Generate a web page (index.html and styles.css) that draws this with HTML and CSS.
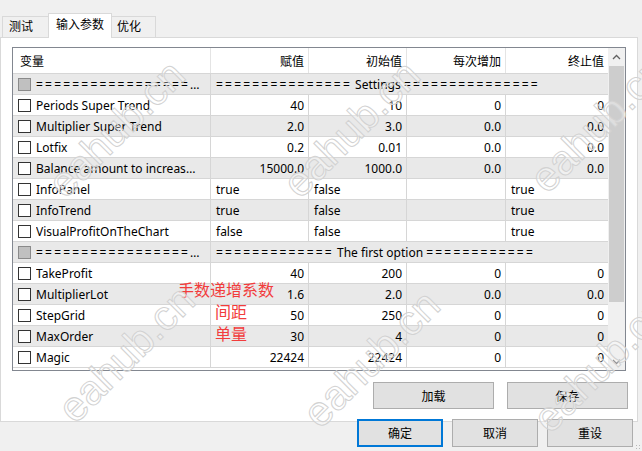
FILE: index.html
```
<!DOCTYPE html>
<html lang="zh-CN">
<head>
    <meta charset="UTF-8">
    <title>输入参数</title>
    <link rel="stylesheet" href="styles.css">
</head>
<body>
    <div class="window">
        <div class="tabs">
            <div class="tab">测试</div>
            <div class="tab active">输入参数</div>
            <div class="tab">优化</div>
        </div>

        <div class="panel">
            <div class="grid">
                <div class="table">
                    <div class="row head">
                        <div class="cell name">变量</div>
                        <div class="cell num">赋值</div>
                        <div class="cell num">初始值</div>
                        <div class="cell num">每次增加</div>
                        <div class="cell num">终止值</div>
                    </div>

                    <div class="row alt sep">
                        <div class="cell name"><span class="chk off"></span><span class="label rule">===============================</span></div>
                        <div class="cell span"><span class="rule">===============</span>&nbsp;Settings&nbsp;<span class="rule">===============</span></div>
                    </div>
                    <div class="row">
                        <div class="cell name"><span class="chk"></span><span class="label">Periods Super Trend</span></div>
                        <div class="cell num">40</div>
                        <div class="cell num">10</div>
                        <div class="cell num">0</div>
                        <div class="cell num">0</div>
                    </div>
                    <div class="row alt">
                        <div class="cell name"><span class="chk"></span><span class="label">Multiplier Super Trend</span></div>
                        <div class="cell num">2.0</div>
                        <div class="cell num">3.0</div>
                        <div class="cell num">0.0</div>
                        <div class="cell num">0.0</div>
                    </div>
                    <div class="row">
                        <div class="cell name"><span class="chk"></span><span class="label">Lotfix</span></div>
                        <div class="cell num">0.2</div>
                        <div class="cell num">0.01</div>
                        <div class="cell num">0.0</div>
                        <div class="cell num">0.0</div>
                    </div>
                    <div class="row alt">
                        <div class="cell name"><span class="chk"></span><span class="label">Balance amount to increase lot</span></div>
                        <div class="cell num">15000.0</div>
                        <div class="cell num">1000.0</div>
                        <div class="cell num">0.0</div>
                        <div class="cell num">0.0</div>
                    </div>
                    <div class="row">
                        <div class="cell name"><span class="chk"></span><span class="label">InfoPanel</span></div>
                        <div class="cell">true</div>
                        <div class="cell">false</div>
                        <div class="cell"></div>
                        <div class="cell">true</div>
                    </div>
                    <div class="row alt">
                        <div class="cell name"><span class="chk"></span><span class="label">InfoTrend</span></div>
                        <div class="cell">true</div>
                        <div class="cell">false</div>
                        <div class="cell"></div>
                        <div class="cell">true</div>
                    </div>
                    <div class="row">
                        <div class="cell name"><span class="chk"></span><span class="label">VisualProfitOnTheChart</span></div>
                        <div class="cell">false</div>
                        <div class="cell">false</div>
                        <div class="cell"></div>
                        <div class="cell">true</div>
                    </div>

                    <div class="row alt sep">
                        <div class="cell name"><span class="chk off"></span><span class="label rule">===============================</span></div>
                        <div class="cell span"><span class="rule">=============</span>&nbsp;The first option&nbsp;<span class="rule">============</span></div>
                    </div>
                    <div class="row">
                        <div class="cell name"><span class="chk"></span><span class="label">TakeProfit</span></div>
                        <div class="cell num">40</div>
                        <div class="cell num">200</div>
                        <div class="cell num">0</div>
                        <div class="cell num">0</div>
                    </div>
                    <div class="row alt">
                        <div class="cell name"><span class="chk"></span><span class="label">MultiplierLot</span></div>
                        <div class="cell num">1.6</div>
                        <div class="cell num">2.0</div>
                        <div class="cell num">0.0</div>
                        <div class="cell num">0.0</div>
                    </div>
                    <div class="row">
                        <div class="cell name"><span class="chk"></span><span class="label">StepGrid</span></div>
                        <div class="cell num">50</div>
                        <div class="cell num">250</div>
                        <div class="cell num">0</div>
                        <div class="cell num">0</div>
                    </div>
                    <div class="row alt">
                        <div class="cell name"><span class="chk"></span><span class="label">MaxOrder</span></div>
                        <div class="cell num">30</div>
                        <div class="cell num">4</div>
                        <div class="cell num">0</div>
                        <div class="cell num">0</div>
                    </div>
                    <div class="row">
                        <div class="cell name"><span class="chk"></span><span class="label">Magic</span></div>
                        <div class="cell num">22424</div>
                        <div class="cell num">22424</div>
                        <div class="cell num">0</div>
                        <div class="cell num">0</div>
                    </div>

                    <!-- notes written over the grid -->
                    <div class="note note-lot">手数递增系数</div>
                    <div class="note note-step">间距</div>
                    <div class="note note-max">单量</div>
                </div>

                <div class="scrollbar">
                    <div class="arrow">
                        <svg width="9" height="6" viewBox="0 0 9 6"><path d="M1 5 L4.5 1.5 L8 5" fill="none" stroke="#606060" stroke-width="1.3"/></svg>
                    </div>
                    <div class="track"><div class="thumb"></div></div>
                    <div class="arrow">
                        <svg width="9" height="6" viewBox="0 0 9 6"><path d="M1 1 L4.5 4.5 L8 1" fill="none" stroke="#606060" stroke-width="1.3"/></svg>
                    </div>
                </div>
            </div>

            <div class="file-buttons">
                <button class="btn wide">加载</button>
                <button class="btn wide">保存</button>
            </div>
        </div>

        <div class="dialog-buttons">
            <button class="btn default">确定</button>
            <button class="btn">取消</button>
            <button class="btn">重设</button>
        </div>
        <div class="grip"></div>

        <!-- site stamp -->
        <div class="stamp s1">eahub.cn</div>
        <div class="stamp s2">eahub.cn</div>
        <div class="stamp s3">eahub.cn</div>
        <div class="stamp s4">eahub.cn</div>
        <div class="stamp s5">eahub.cn</div>
        <div class="stamp s6">eahub.cn</div>
    </div>
</body>
</html>
```

FILE: styles.css
```
body {
    margin: 0;
    background-color: #f0f0f0;
    font-family: "Noto Sans", "Noto Sans CJK SC", sans-serif;
    font-size: 12px;
    color: #000;
}
.window {
    position: relative;
    width: 642px;
    height: 451px;
    overflow: hidden;
}
.tabs {
    display: flex;
    align-items: flex-end;
    height: 37px;
    padding-left: 2px;
    box-sizing: border-box;
}
.tab {
    width: 47px;
    height: 21px;
    box-sizing: border-box;
    padding-left: 6px;
    border: 1px solid #d9d9d9;
    border-bottom: none;
    background-color: #f0f0f0;
    line-height: 20px;
    margin-right: -1px;
}
.tab.active {
    position: relative;
    z-index: 1;
    width: 64px;
    height: 25px;
    margin-bottom: -1px;
    padding-left: 7px;
    background-color: white;
    line-height: 22px;
}
.tab:last-child {
    width: 45px;
    padding-left: 5px;
}
.panel {
    width: 638px;
    height: 385px;
    box-sizing: border-box;
    border: 1px solid #d9d9d9;
    background-color: white;
    padding: 9px 0 0 11px;
}
.grid {
    display: flex;
    width: 614px;
    height: 324px;
    box-sizing: border-box;
    border: 1px solid #828790;
}
.table {
    position: relative;
    width: 595px;
}
.row {
    display: grid;
    grid-template-columns: 198px 98px 98px 99px 102px;
    height: 21px;
    box-sizing: border-box;
    border-bottom: 1px solid #d6d6d6;
}
.row.alt {
    background-color: #e9e9e9;
}
.row.head {
    height: 26px;
    background-color: white;
}
.cell {
    display: flex;
    align-items: center;
    padding: 0 4px 0 5px;
    border-right: 1px solid #d6d6d6;
    white-space: nowrap;
    overflow: hidden;
}
.cell.num {
    justify-content: flex-end;
}
.row.head .cell {
    padding-top: 1px;
    border-color: #e4e4e4;
}
.row.head .name {
    padding-left: 7px;
}
.cell:last-child {
    border-right: none;
}
.cell.span {
    grid-column: 2 / 6;
    padding-left: 5px;
}
.name {
    padding-left: 5px;
}
.label {
    overflow: hidden;
    text-overflow: ellipsis;
    padding-right: 6px;
}
/* the divider rows use wide "=" runs */
.rule {
    letter-spacing: 2.2px;
}
.chk {
    flex: none;
    width: 13px;
    height: 13px;
    box-sizing: border-box;
    border: 1px solid #333;
    background-color: white;
    margin-right: 5px;
}
.chk.off {
    border-color: #8a8a8a;
    background-color: #c0c0c0;
}
.note {
    position: absolute;
    color: #f23c3c;
    font-size: 16px;
    line-height: 20px;
}
.note-lot {
    left: 165px;
    top: 232px;
}
.note-step {
    left: 202px;
    top: 254px;
}
.note-max {
    left: 202px;
    top: 276px;
}
.scrollbar {
    display: flex;
    flex-direction: column;
    width: 17px;
    background-color: #f0f0f0;
}
.arrow {
    display: flex;
    align-items: center;
    justify-content: center;
    height: 17px;
}
.track {
    flex: 1;
}
.thumb {
    height: 236px;
    margin: 1px 1px 0;
    background-color: #cdcdcd;
}
.file-buttons {
    display: flex;
    justify-content: flex-end;
    gap: 13px;
    margin-top: 11px;
    padding-right: 9px;
}
.btn {
    font-family: "Noto Sans", "Noto Sans CJK SC", sans-serif;
    font-size: 12px;
    color: #000;
    background-color: #e1e1e1;
    border: 1px solid #adadad;
    padding: 0;
    height: 27px;
}
.btn.wide {
    width: 121px;
}
/* OK / Cancel / Reset sit on the lower edge of the tab page */
.dialog-buttons {
    position: relative;
    display: flex;
    justify-content: flex-end;
    gap: 9px;
    padding-right: 9px;
    margin-top: -3px;
}
.dialog-buttons .btn {
    width: 86px;
    height: 28px;
}
.btn.default {
    border: 2px solid #0078d7;
}
.grip {
    position: absolute;
    right: 1px;
    bottom: 1px;
    width: 6px;
    height: 6px;
    background-image: radial-gradient(circle, #b8b8b8 0.7px, transparent 0.9px);
    background-size: 3px 3px;
}
.stamp {
    position: absolute;
    font-family: "Liberation Sans", sans-serif;
    font-size: 42px;
    color: rgba(255, 255, 255, 0.35);
    -webkit-text-stroke: 1px #d2d2d2;
    transform: rotate(-45deg);
    transform-origin: center;
    pointer-events: none;
    white-space: nowrap;
}
.s1 { left: 30px; top: 105px; }
.s2 { left: 265px; top: 105px; }
.s3 { left: 512px; top: 100px; }
.s4 { left: 40px; top: 330px; }
.s5 { left: 285px; top: 335px; }
.s6 { left: 515px; top: 340px; }
```
